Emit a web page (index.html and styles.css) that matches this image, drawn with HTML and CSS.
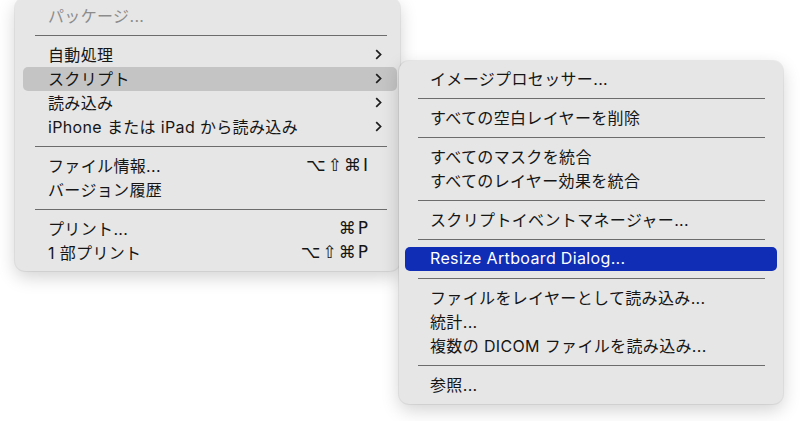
FILE: index.html
```html
<!DOCTYPE html>
<html lang="ja">
<head>
    <meta charset="UTF-8">
    <meta name="viewport" content="width=device-width, initial-scale=1.0">
    <title>ファイル メニュー</title>
    <link rel="stylesheet" href="styles.css">
</head>
<body>
    <div class="desktop">
        <!-- main file menu (top part scrolled off) -->
        <ul class="menu file-menu">
            <li class="item disabled"><span class="label">パッケージ...</span></li>
            <li class="sep"></li>
            <li class="item"><span class="label">自動処理</span><svg class="chevron" viewBox="0 0 7 11"><polyline points="1.2,1.2 5.6,5.5 1.2,9.8"/></svg></li>
            <li class="item hover"><span class="label">スクリプト</span><svg class="chevron" viewBox="0 0 7 11"><polyline points="1.2,1.2 5.6,5.5 1.2,9.8"/></svg></li>
            <li class="item"><span class="label">読み込み</span><svg class="chevron" viewBox="0 0 7 11"><polyline points="1.2,1.2 5.6,5.5 1.2,9.8"/></svg></li>
            <li class="item"><span class="label">iPhone または iPad から読み込み</span><svg class="chevron" viewBox="0 0 7 11"><polyline points="1.2,1.2 5.6,5.5 1.2,9.8"/></svg></li>
            <li class="sep"></li>
            <li class="item"><span class="label">ファイル情報...</span><span class="keys">⌥⇧⌘I</span></li>
            <li class="item"><span class="label">バージョン履歴</span></li>
            <li class="sep"></li>
            <li class="item"><span class="label">プリント...</span><span class="keys">⌘P</span></li>
            <li class="item"><span class="label">1 部プリント</span><span class="keys">⌥⇧⌘P</span></li>
        </ul>

        <!-- scripts submenu -->
        <ul class="menu sub-menu">
            <li class="item"><span class="label">イメージプロセッサー...</span></li>
            <li class="sep"></li>
            <li class="item"><span class="label">すべての空白レイヤーを削除</span></li>
            <li class="sep"></li>
            <li class="item"><span class="label">すべてのマスクを統合</span></li>
            <li class="item"><span class="label">すべてのレイヤー効果を統合</span></li>
            <li class="sep"></li>
            <li class="item"><span class="label">スクリプトイベントマネージャー...</span></li>
            <li class="sep"></li>
            <li class="item selected"><span class="label">Resize Artboard Dialog...</span></li>
            <li class="sep"></li>
            <li class="item"><span class="label">ファイルをレイヤーとして読み込み...</span></li>
            <li class="item"><span class="label">統計...</span></li>
            <li class="item"><span class="label">複数の DICOM ファイルを読み込み...</span></li>
            <li class="sep"></li>
            <li class="item"><span class="label">参照...</span></li>
        </ul>
    </div>
</body>
</html>
```

FILE: styles.css
```css
body {
    margin: 0;
    background-color: #fff;
    font-family: Inter, "Noto Sans CJK JP", sans-serif;
    font-size: 16px;
    letter-spacing: 0.35px;
    color: #151515;
}

.desktop {
    position: relative;
    width: 800px;
    height: 421px;
    overflow: hidden;
}

.menu {
    list-style: none;
    margin: 0;
    background-color: #e6e6e6;
    border-radius: 10px;
    box-shadow: 0 0 0 1px rgba(0, 0, 0, 0.06), 0 6px 18px rgba(0, 0, 0, 0.18);
}

.file-menu {
    width: 385px;
    margin: -2px 0 0 15px;
    padding: 6px 3px 6px 8px;
    box-sizing: border-box;
}

.file-menu .item {
    padding-right: 15px;
}

.sub-menu {
    position: absolute;
    left: 399px;
    top: 61px;
    width: 384px;
    padding: 6px 6px 7px;
    box-sizing: border-box;
}

.item {
    display: flex;
    align-items: center;
    height: 24px;
    padding: 0 17px 2px 25px;
    box-sizing: border-box;
    border-radius: 5px;
    white-space: nowrap;
}

.item .label {
    flex: 1;
}

.disabled {
    color: #8c8c8c;
}

.hover {
    background-color: #c4c4c4;
}

.selected {
    background-color: #0f2db5;
    color: #fff;
}

.sep {
    height: 15px;
    position: relative;
}

.sep::after {
    content: "";
    position: absolute;
    left: 12px;
    right: 10px;
    top: 7px;
    height: 1px;
    background-color: #6c6c6c;
}

.sub-menu .sep::after {
    left: 13px;
    right: 12px;
}

.chevron {
    width: 7px;
    height: 11px;
    fill: none;
    stroke: #1d1d1d;
    stroke-width: 1.7;
}

.keys {
    margin-right: 12px;
    letter-spacing: 2px;
    font-family: "DejaVu Sans", sans-serif;
    font-size: 17px;
}
```
